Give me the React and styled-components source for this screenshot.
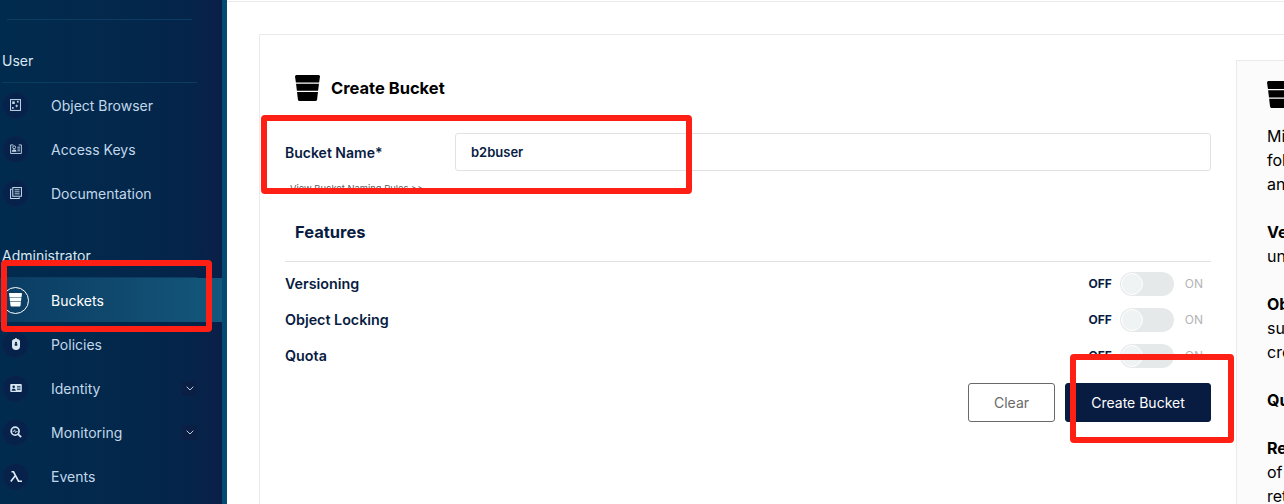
import React from 'react';
import styled, { createGlobalStyle } from 'styled-components';

const GlobalStyle = createGlobalStyle`
  html, body {
    margin: 0;
    padding: 0;
    height: 504px;
    overflow: hidden;
    background: #fff;
  }
  * {
    box-sizing: border-box;
  }
`;

const BucketIcon = ({ size = 16, color = '#000' }) => (
  <svg width={size} height={size * 1.04} viewBox="0 0 25 26" fill="none">
    <path d="M1.5 0h22a1.5 1.5 0 0 1 1.5 1.5l-.9 6.1H.9L0 1.5A1.5 1.5 0 0 1 1.5 0z" fill={color} />
    <path d="M1.05 8.8h22.9l-.85 7H1.9z" fill={color} />
    <path d="M2.05 17h20.9l-.85 7.4a1.8 1.8 0 0 1-1.8 1.6H4.7a1.8 1.8 0 0 1-1.8-1.6z" fill={color} />
  </svg>
);

const ObjectIcon = () => (
  <svg width="11" height="12" viewBox="0 0 12 13" fill="none">
    <rect x="0.6" y="0.6" width="10.8" height="11.8" stroke="#c5d9e8" strokeWidth="1.1" />
    <rect x="2.4" y="2.6" width="2.8" height="2.8" fill="#c5d9e8" />
    <rect x="7.6" y="2" width="1.8" height="1.8" fill="#c5d9e8" />
    <path d="M7.3 5.6l.6 1.3 1.3.6-1.3.6-.6 1.3-.6-1.3-1.3-.6 1.3-.6z" fill="#c5d9e8" />
    <rect x="2.2" y="8.8" width="1.8" height="1.8" fill="#c5d9e8" />
  </svg>
);

const KeysIcon = () => (
  <svg width="12" height="10" viewBox="0 0 13 11" fill="none">
    <path d="M3.5 1H.6v9.4h11.8V1H9.5" stroke="#c5d9e8" strokeWidth="1" />
    <circle cx="4.5" cy="3.6" r="1.6" stroke="#c5d9e8" strokeWidth="1" />
    <path d="M2 8.4c0-1.6 1-2.3 2.5-2.3S7 6.8 7 8.4z" fill="#c5d9e8" />
    <path d="M8 3.5h3M8 5.5h3M8 7.5h3" stroke="#c5d9e8" strokeWidth="1" />
  </svg>
);

const DocsIcon = () => (
  <svg width="12" height="12" viewBox="0 0 13 13" fill="none">
    <path d="M2 2.5H.6v9.9h9.4V11" stroke="#c5d9e8" strokeWidth="1.1" />
    <rect x="3" y="0.6" width="9.4" height="9.4" stroke="#c5d9e8" strokeWidth="1.1" />
    <path d="M5 3h5.4M5 5.2h5.4M5 7.4h5.4" stroke="#c5d9e8" strokeWidth="1" />
  </svg>
);

const PolicyIcon = () => (
  <svg width="8" height="12" viewBox="0 0 8 12" fill="none">
    <path d="M4 0c.6 0 .9.5 1 1 1.8.3 3 1 3 2.5v5C8 10.500 6.500 12 4 12S0 10.500 0 8.500v-5C0 2 1.200 1.300 3 1c.1-.5.4-1 1-1z" fill="#d7e5f0" />
    <circle cx="4" cy="4.800" r="1.100" fill="#04264a" />
    <rect x="2.700" y="5.400" width="2.600" height="2.400" rx="0.300" fill="#04264a" />
  </svg>
);

const IdentityIcon = () => (
  <svg width="12" height="8" viewBox="0 0 13 9" fill="none">
    <rect width="13" height="9" rx="1" fill="#d7e5f0" />
    <circle cx="3.900" cy="3" r="1.400" fill="#04264a" />
    <path d="M1.600 7.500c0-1.500 1-2.200 2.300-2.200S6.200 6 6.200 7.500z" fill="#04264a" />
    <path d="M7.600 2.700h4M7.600 4.500h4M7.600 6.300h4" stroke="#04264a" strokeWidth="0.900" />
  </svg>
);

const MonitorIcon = () => (
  <svg width="12" height="12" viewBox="0 0 14 14" fill="none">
    <circle cx="6" cy="6" r="4.600" stroke="#d7e5f0" strokeWidth="2" />
    <path d="M9.400 9.400L13 13" stroke="#d7e5f0" strokeWidth="2.200" />
    <path d="M3 6.400h1.400l1-2 1.200 3.600.9-1.600H9" stroke="#d7e5f0" strokeWidth="0.900" />
  </svg>
);

const LambdaIcon = () => (
  <svg width="12" height="11" viewBox="0 0 12 11" fill="none">
    <path d="M1.500.8h2l5 9.400H12M5.600 4.300L.8 10.500" stroke="#e2edf5" strokeWidth="1.600" />
  </svg>
);

const Chevron = () => (
  <svg width="8" height="5" viewBox="0 0 8 5" fill="none">
    <path d="M.7.7L4 4l3.300-3.300" stroke="#b9cbdb" strokeWidth="1" />
  </svg>
);

const Page = styled.div`
  display: flex;
  width: 1284px;
  height: 504px;
  overflow: hidden;
  font-family: Inter, "Noto Sans", sans-serif;
  color: #081c42;
`;

const Sidebar = styled.aside`
  flex: 0 0 227px;
  height: 504px;
  padding: 19px 5px 0 0;
  background: linear-gradient(#054a74, #054a74) right top / 5px 100% no-repeat,
    linear-gradient(90deg, #012b4e 0%, #03284c 50%, #05244a 85%, #0a1f47 100%) left top / 222px 100% no-repeat;
`;

const TopRule = styled.div`
  height: 1px;
  margin: 0 30px 0 7px;
  background: #0b3c62;
`;

const SectionLabel = styled.div`
  height: 20px;
  margin-top: ${(p) => p.$top}px;
  padding-left: 2px;
  font-size: 14px;
  line-height: 20px;
  color: #dbe8f2;
`;

const SectionRule = styled.div`
  height: 1px;
  margin: 11px 25px 0 2px;
  background: #0b3c62;
`;

const Item = styled.div`
  display: flex;
  align-items: center;
  height: 44px;
  padding: 0 25px 0 2px;
  font-size: 14px;
  color: ${(p) => (p.$active ? '#ffffff' : '#c2d8ea')};
  background: ${(p) =>
    p.$active ? 'linear-gradient(90deg, #0b3d63 0%, #10486d 50%, #14577c 100%)' : 'transparent'};
`;

const IconCircle = styled.span`
  display: flex;
  align-items: center;
  justify-content: center;
  flex: 0 0 27px;
  height: 27px;
  margin-right: 22px;
  border-radius: 50%;
  background: ${(p) => (p.$active ? 'transparent' : '#06224a')};
  border: 1px solid ${(p) => (p.$active ? '#ffffff' : '#0a2652')};
`;

const ItemLabel = styled.span`
  flex: 1;
`;

const ChevronBox = styled.span`
  display: flex;
  align-items: center;
  justify-content: center;
  width: 15px;
  height: 15px;
  border-radius: 2px;
  background: #0b1f45;
`;

const Main = styled.main`
  flex: 1;
  min-width: 0;
  padding-top: 1px;
`;

const TopLine = styled.div`
  height: 1px;
  background: #eaeaea;
`;

const Content = styled.div`
  display: flex;
  margin: 32px 0 0 32px;
`;

const Card = styled.section`
  flex: 0 0 auto;
  width: 1100px;
  height: 520px;
  margin-right: -123px;
  padding: 40px 25px 0;
  border: 1px solid #eaeaea;
`;

const Title = styled.h1`
  display: flex;
  align-items: center;
  gap: 11px;
  height: 26px;
  margin: 0 0 0 10px;
  font-size: 16.5px;
  font-weight: 700;
  color: #000;
`;

const CardBody = styled.div`
  width: 926px;
`;

const NameRow = styled.div`
  display: flex;
  align-items: center;
  height: 38px;
  margin-top: 32px;
`;

const FieldLabel = styled.label`
  flex: 0 0 170px;
  font-size: 14px;
  font-weight: 600;
  color: #081c42;
`;

const NameInput = styled.div`
  flex: 1;
  height: 38px;
  padding-left: 15px;
  border: 1px solid #e2e2e2;
  border-radius: 3px;
  font-size: 13px;
  font-weight: 600;
  line-height: 36px;
  color: #081c42;
`;

const RulesLink = styled.div`
  margin: 12px 0 0 5px;
  font-size: 9.4px;
  line-height: 12px;
  color: #5e5e5e;
`;

const Features = styled.h2`
  height: 20px;
  margin: 27px 0 0 10px;
  font-size: 16.5px;
  font-weight: 700;
  line-height: 20px;
  color: #081c42;
`;

const FeatureList = styled.div`
  margin-top: 19px;
  padding-top: 4px;
  border-top: 1px solid #e2e2e2;
`;

const FeatureRow = styled.div`
  display: flex;
  align-items: center;
  justify-content: space-between;
  height: 36px;
  padding-right: 8px;
  font-size: 14.3px;
  font-weight: 600;
`;

const FeatureName = styled.span`
  padding-bottom: 2px;
`;

const Switch = styled.div`
  display: flex;
  align-items: center;
  font-size: 12px;
`;

const Off = styled.span`
  padding-bottom: 2px;
  font-weight: 700;
  color: #081c42;
`;

const On = styled.span`
  padding-bottom: 2px;
  font-weight: 400;
  color: #b4b4b4;
`;

const Track = styled.span`
  position: relative;
  width: 54px;
  height: 24px;
  margin: 0 11px 0 8px;
  border-radius: 12px;
  background: #e6e9ea;
`;

const Knob = styled.span`
  position: absolute;
  top: 1px;
  left: 1px;
  width: 22px;
  height: 22px;
  border-radius: 50%;
  background: #f0f3f4;
  border: 1px solid #fff;
`;

const Actions = styled.div`
  display: flex;
  justify-content: flex-end;
  gap: 10px;
  margin-top: 9px;
`;

const Button = styled.button`
  height: 39px;
  width: ${(p) => (p.$primary ? 146 : 87)}px;
  padding: 0;
  border: 1px solid ${(p) => (p.$primary ? '#081c42' : '#696969')};
  border-radius: 3px;
  background: ${(p) => (p.$primary ? '#081c42' : '#fff')};
  color: ${(p) => (p.$primary ? '#fff' : '#696969')};
  font-family: inherit;
  font-size: 14px;
`;

const Help = styled.aside`
  flex: 0 0 auto;
  width: 400px;
  height: 500px;
  margin-top: 26px;
  padding: 20px 30px;
  background: #fbfbfb;
  border: 1px solid #eaeaea;
  font-size: 16px;
  line-height: 24px;
  color: #000;
`;

const HelpIcon = styled.div`
  height: 27px;
  margin-bottom: 16px;
`;

const HelpPara = styled.p`
  margin: 0 0 24px;
  white-space: nowrap;
`;

const HelpLine = styled.span`
  display: block;
`;

const Annotation = styled.div`
  position: absolute;
  left: ${(p) => p.$x}px;
  top: ${(p) => p.$y}px;
  width: ${(p) => p.$w}px;
  height: ${(p) => p.$h}px;
  border: 6px solid #ff2015;
  border-radius: 4px;
`;

const userItems = [
  { label: 'Object Browser', icon: <ObjectIcon /> },
  { label: 'Access Keys', icon: <KeysIcon /> },
  { label: 'Documentation', icon: <DocsIcon /> },
];

const adminItems = [
  { label: 'Buckets', icon: <BucketIcon size={13} color="#fff" />, active: true },
  { label: 'Policies', icon: <PolicyIcon /> },
  { label: 'Identity', icon: <IdentityIcon />, more: true },
  { label: 'Monitoring', icon: <MonitorIcon />, more: true },
  { label: 'Events', icon: <LambdaIcon /> },
];

const features = ['Versioning', 'Object Locking', 'Quota'];

const NavItem = ({ item }) => (
  <Item $active={item.active}>
    <IconCircle $active={item.active}>{item.icon}</IconCircle>
    <ItemLabel>{item.label}</ItemLabel>
    {item.more && (
      <ChevronBox>
        <Chevron />
      </ChevronBox>
    )}
  </Item>
);

export default function App() {
  return (
    <Page>
      <GlobalStyle />
      <Sidebar>
        <TopRule />
        <SectionLabel $top={31}>User</SectionLabel>
        <SectionRule />
        {userItems.map((item) => (
          <NavItem key={item.label} item={item} />
        ))}
        <SectionLabel $top={31}>Administrator</SectionLabel>
        <SectionRule />
        {adminItems.map((item) => (
          <NavItem key={item.label} item={item} />
        ))}
      </Sidebar>
      <Main>
        <TopLine />
        <Content>
          <Card>
            <Title>
              <BucketIcon size={25} />
              Create Bucket
            </Title>
            <CardBody>
              <NameRow>
                <FieldLabel>Bucket Name*</FieldLabel>
                <NameInput>b2buser</NameInput>
              </NameRow>
              <RulesLink>View Bucket Naming Rules &gt;&gt;</RulesLink>
              <Features>Features</Features>
              <FeatureList>
                {features.map((name) => (
                  <FeatureRow key={name}>
                    <FeatureName>{name}</FeatureName>
                    <Switch>
                      <Off>OFF</Off>
                      <Track>
                        <Knob />
                      </Track>
                      <On>ON</On>
                    </Switch>
                  </FeatureRow>
                ))}
              </FeatureList>
              <Actions>
                <Button>Clear</Button>
                <Button $primary>Create Bucket</Button>
              </Actions>
            </CardBody>
          </Card>
          <Help>
            <HelpIcon>
              <BucketIcon size={26} />
            </HelpIcon>
            <HelpPara>
              <HelpLine>MinIO uses buckets to organize objects. A bucket is similar to a</HelpLine>
              <HelpLine>folder or directory in a filesystem, where each bucket can hold</HelpLine>
              <HelpLine>an arbitrary number of objects.</HelpLine>
            </HelpPara>
            <HelpPara>
              <HelpLine>
                <b>Versioning</b> allows to keep multiple versions of the same object
              </HelpLine>
              <HelpLine>under the same key.</HelpLine>
            </HelpPara>
            <HelpPara>
              <HelpLine>
                <b>Object Locking</b> prevents objects from being deleted. Required to
              </HelpLine>
              <HelpLine>support retention and legal hold. Can only be enabled at bucket</HelpLine>
              <HelpLine>creation.</HelpLine>
            </HelpPara>
            <HelpPara>
              <HelpLine>
                <b>Quota</b> limits the amount of data in the bucket.
              </HelpLine>
            </HelpPara>
            <HelpPara>
              <HelpLine>
                <b>Retention</b> imposes rules to prevent object deletion for a period
              </HelpLine>
              <HelpLine>of time. Versioning must be enabled in order to set bucket</HelpLine>
              <HelpLine>retention policies.</HelpLine>
            </HelpPara>
          </Help>
        </Content>
      </Main>
      <Annotation $x={261} $y={115} $w={431} $h={79} />
      <Annotation $x={1} $y={260} $w={211} $h={72} />
      <Annotation $x={1070} $y={354} $w={164} $h={89} />
    </Page>
  );
}
